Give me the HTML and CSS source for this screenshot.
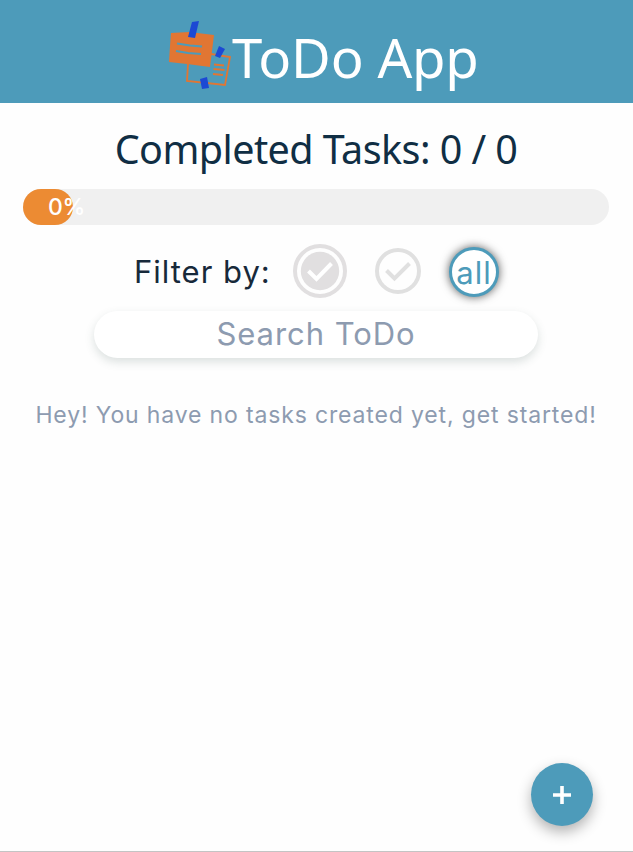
FILE: index.html
```html
<!DOCTYPE html>
<html lang="en">
<head>
<meta charset="utf-8">
<title>ToDo App</title>
<link rel="stylesheet" href="styles.css">
</head>
<body>
<header class="header">
  <svg class="logo" viewBox="0 0 64 70">
    <path d="M19 43 L18 60 L56 64 L61 36 L42 33" fill="none" stroke="#e17633" stroke-width="1.8"/>
    <path d="M45 43.500l10 1M44.500 48l11 1M44 53l10 1" stroke="#e17633" stroke-width="1.800"/>
    <path d="M2 12 L20 11 L45 14 L41 46 L18 43 L0 41 L1 25Z" fill="#e17633"/>
    <path d="M8 22.500l13 2 12 1M7 30l12 2 13 1" fill="none" stroke="#4d9bba" stroke-width="2"/>
    <path d="M23 1 L30 0 L26 17 L19 16Z" fill="#1c49d4"/>
    <path d="M50 25 L56 28 L51 37 L46 35Z" fill="#1c49d4"/>
    <path d="M31 58 L38 56 L40 67 L33 68Z" fill="#1c49d4"/>
  </svg>
  <h1 class="title">ToDo App</h1>
</header>
<main class="main">
  <h2 class="completed">Completed Tasks: 0 / 0</h2>
  <div class="progress"><div class="bar"><span class="percent">0%</span></div></div>
  <div class="filters">
    <span class="filter-label">Filter by:</span>
    <svg class="filter-done" viewBox="0 0 54 54">
      <circle cx="27" cy="27" r="25" fill="none" stroke="#e1dfe0" stroke-width="4"/>
      <circle cx="27" cy="27" r="19.200" fill="#e1dfe0"/>
      <path d="M15.500 27l8 8L38.500 19.500" fill="none" stroke="#fff" stroke-width="4"/>
    </svg>
    <svg class="filter-open" viewBox="0 0 46 46">
      <circle cx="23" cy="23" r="21" fill="none" stroke="#e0e0e0" stroke-width="4"/>
      <path d="M11.500 22.500l8 8L34.500 15.500" fill="none" stroke="#e0e0e0" stroke-width="4"/>
    </svg>
    <button class="filter-all"><span>all</span></button>
  </div>
  <div class="search">Search ToDo</div>
  <p class="empty">Hey! You have no tasks created yet, get started!</p>
</main>
<button class="add"><svg class="plus" viewBox="0 0 18 18"><path d="M9 0v18M0 9h18" stroke="#fff" stroke-width="3.600"/></svg></button>
</body>
</html>
```

FILE: styles.css
```css
* { box-sizing: border-box; }
body {
  margin: 0;
  height: 852px;
  background: #fefefe;
  border-bottom: 1px solid #c4c4c4;
  font-family: Inter, "Open Sans", sans-serif;
  overflow: hidden;
}
h1, h2, p { margin: 0; font-weight: 400; white-space: nowrap; }
button { padding: 0; font-family: inherit; }
.header {
  height: 103px;
  background: #4d9bba;
  display: flex;
  padding: 21px 0 0 169px;
}
.logo { width: 64px; height: 70px; flex: none; }
.title {
  margin-left: -1px;
  font-family: "Noto Sans", sans-serif;
  font-size: 54.5px;
  line-height: 73px;
  letter-spacing: -.2px;
  color: #fff;
}
.main { display: flex; flex-direction: column; align-items: center; padding-right: 1px; }
.completed {
  height: 86px;
  padding-top: 18px;
  font-family: "Noto Sans", sans-serif;
  font-size: 39.5px;
  line-height: 56px;
  letter-spacing: -.55px;
  color: #102e44;
}
.progress {
  width: 586px;
  height: 36px;
  border-radius: 18px;
  background: #f0f0f0;
}
.bar {
  width: 50px;
  height: 36px;
  border-radius: 18px;
  background: #ec8b33;
  padding-left: 25px;
}
.percent { font-size: 23px; line-height: 36px; font-weight: 500; letter-spacing: -.4px; color: #fff; }
.filters {
  width: 364px;
  height: 86px;
  padding-top: 6px;
  display: flex;
  align-items: center;
}
.filter-label {
  width: 159px;
  flex: none;
  font-size: 31px;
  letter-spacing: 1px;
  color: #17293a;
  white-space: nowrap;
}
.filter-done { width: 54px; height: 54px; flex: none; margin-right: 28px; }
.filter-open { width: 46px; height: 46px; flex: none; margin-right: 28px; }
.filter-all {
  width: 50px;
  height: 50px;
  flex: none;
  margin-top: 2px;
  border: 3px solid #4d9bba;
  border-radius: 50%;
  background: #fff;
  color: #4d9bba;
  font-size: 31px;
  letter-spacing: 1px;
  box-shadow: 0 0 10px rgba(0, 0, 0, .65);
}
.search {
  width: 444px;
  height: 47px;
  border-radius: 24px;
  background: #fff;
  box-shadow: 0 4px 10px rgba(60, 90, 85, .18);
  text-align: center;
  font-size: 31px;
  line-height: 46px;
  letter-spacing: .95px;
  color: #8d9bb0;
}
.empty { margin-top: 42px; font-size: 23px; line-height: 30px; letter-spacing: .85px; color: #8d9bb0; }
.add {
  position: absolute;
  left: 531px;
  top: 763px;
  width: 62px;
  height: 63px;
  border: 0;
  border-radius: 50%;
  background: #4d9bba;
  box-shadow: 0 6px 14px rgba(0, 0, 0, .3);
  display: flex;
  align-items: center;
  justify-content: center;
}
.plus { width: 18px; height: 18px; }
```
